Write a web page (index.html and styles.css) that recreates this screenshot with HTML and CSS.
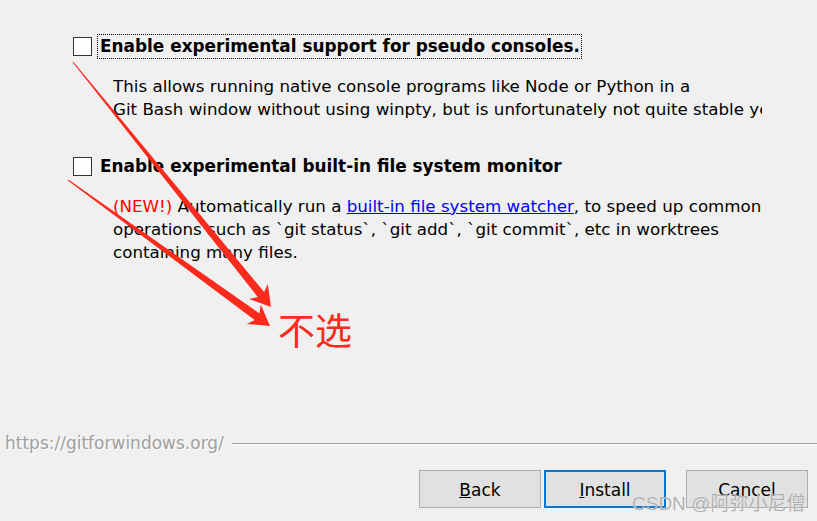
FILE: index.html
```html
<!DOCTYPE html>
<html>
<head>
<meta charset="utf-8">
<link rel="stylesheet" href="styles.css">
</head>
<body>
<div class="page">
  <div class="content">
    <div class="option">
      <span class="box"></span>
      <span class="label focus">Enable experimental support for pseudo consoles.</span>
    </div>
    <div class="desc desc-first">
      <div class="line">This allows running native console programs like Node or Python in a</div>
      <div class="line">Git Bash window without using winpty, but is unfortunately not quite stable yet.</div>
    </div>
    <div class="option option-second">
      <span class="box"></span>
      <span class="label">Enable experimental built-in file system monitor</span>
    </div>
    <div class="desc desc-second">
      <div class="line"><span class="new">(NEW!)</span> Automatically run a <span class="link">built-in file system watcher</span>, to speed up common</div>
      <div class="line">operations such as `git status`, `git add`, `git commit`, etc in worktrees</div>
      <div class="line">containing many files.</div>
    </div>
  </div>
  <div class="footer">
    <div class="brand-row">
      <span class="brand">https://gitforwindows.org/</span>
      <span class="rule"></span>
    </div>
    <div class="buttons">
      <button class="btn"><u>B</u>ack</button>
      <button class="btn btn-default"><u>I</u>nstall</button>
      <button class="btn btn-cancel">Cancel</button>
    </div>
  </div>
  <svg class="arrows" width="817" height="521" viewBox="0 0 817 521">
    <polygon fill="#fa2a1c" points="72.6,62.3 257.8,297.1 249.1,299.0 271,307 267.8,283.9 264.1,292.0 73.4,61.7"/>
    <polygon fill="#fa2a1c" points="67.7,180.4 254.7,319.9 246.8,324.0 270,326 260.8,304.6 259.4,313.4 68.3,179.6"/>
  </svg>
  <div class="note">不选</div>
  <div class="watermark">CSDN @阿弥小尼僧</div>
</div>
</body>
</html>
```
FILE: styles.css
```css
html, body {
  margin: 0;
  padding: 0;
  background: #f0f0f0;
}
.page {
  position: relative;
  width: 817px;
  height: 521px;
  overflow: hidden;
  display: flex;
  flex-direction: column;
  font-family: "DejaVu Sans", sans-serif;
  font-size: 16.7px;
  color: #000;
}
.content {
  padding: 34px 0 0 73px;
}
.option {
  display: flex;
  align-items: center;
  height: 25px;
}
.option-second {
  margin-top: 33px;
}
.box {
  width: 17px;
  height: 17px;
  border: 1px solid #333;
  background: #fff;
  flex: none;
}
.label {
  margin-left: 5px;
  padding: 0 1px 0 2px;
  font-weight: bold;
  font-size: 16.9px;
  line-height: 23px;
  border: 1px dotted transparent;
}
.focus {
  border-color: #000;
}
.desc {
  margin-left: 40px;
  width: 649px;
  overflow: hidden;
  line-height: 23px;
  white-space: nowrap;
}
.desc-first {
  margin-top: 16px;
}
.desc-second {
  margin-top: 16px;
}
.new {
  color: #ff0000;
}
.link {
  color: #0000ff;
  text-decoration: underline;
}
.footer {
  margin-top: auto;
  padding-bottom: 13px;
}
.brand-row {
  display: flex;
  align-items: center;
  padding-left: 5px;
  height: 20px;
}
.brand {
  color: #a0a0a0;
  text-shadow: 1px 1px 0 #fff;
  font-size: 17px;
}
.rule {
  flex: 1;
  margin-left: 8px;
  border-top: 1px solid #a0a0a0;
  border-bottom: 1px solid #fff;
  margin-top: 2px;
}
.buttons {
  display: flex;
  justify-content: flex-end;
  padding-right: 9px;
  margin-top: 17px;
}
.btn {
  width: 122px;
  height: 38px;
  background: #e1e1e1;
  border: 1px solid #adadad;
  font-family: "DejaVu Sans", sans-serif;
  font-size: 17px;
  color: #000;
  padding: 2px 0 0 0;
  margin: 0;
}
.btn + .btn {
  margin-left: 3px;
}
.btn-default {
  border: 2px solid #0078d7;
}
.btn + .btn-cancel {
  margin-left: 20px;
}
.arrows {
  position: absolute;
  left: 0;
  top: 0;
}
.note {
  position: absolute;
  left: 278px;
  top: 311px;
  font-family: "Noto Sans CJK SC", sans-serif;
  font-size: 37px;
  line-height: 1;
  color: #fa2a1c;
}
.watermark {
  position: absolute;
  left: 632px;
  top: 488px;
  font-family: "Liberation Sans", "Noto Sans CJK SC", sans-serif;
  font-size: 19px;
  color: rgba(150, 150, 150, 0.75);
  text-shadow: 0 0 1px #fff;
}
```
